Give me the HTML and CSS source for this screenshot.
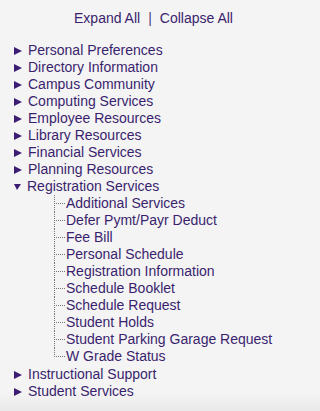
FILE: index.html
```html
<!DOCTYPE html>
<html lang="en">
<head>
<meta charset="utf-8">
<title>Menu</title>
<link rel="stylesheet" href="styles.css">
</head>
<body>
<div class="page">
  <div class="toolbar">
    <a href="#" class="link">Expand All</a><span class="sep">|</span><a href="#" class="link">Collapse All</a>
  </div>
  <ul class="tree">
    <li class="node"><div class="label"><span class="arrow right"></span><a href="#" class="link">Personal Preferences</a></div></li>
    <li class="node"><div class="label"><span class="arrow right"></span><a href="#" class="link">Directory Information</a></div></li>
    <li class="node"><div class="label"><span class="arrow right"></span><a href="#" class="link">Campus Community</a></div></li>
    <li class="node"><div class="label"><span class="arrow right"></span><a href="#" class="link">Computing Services</a></div></li>
    <li class="node"><div class="label"><span class="arrow right"></span><a href="#" class="link">Employee Resources</a></div></li>
    <li class="node"><div class="label"><span class="arrow right"></span><a href="#" class="link">Library Resources</a></div></li>
    <li class="node"><div class="label"><span class="arrow right"></span><a href="#" class="link">Financial Services</a></div></li>
    <li class="node"><div class="label"><span class="arrow right"></span><a href="#" class="link">Planning Resources</a></div></li>
    <li class="node open">
      <div class="label"><span class="arrow down"></span><a href="#" class="link">Registration Services</a></div>
      <ul class="sub">
        <li class="leaf"><a href="#" class="link">Additional Services</a></li>
        <li class="leaf"><a href="#" class="link">Defer Pymt/Payr Deduct</a></li>
        <li class="leaf"><a href="#" class="link">Fee Bill</a></li>
        <li class="leaf"><a href="#" class="link">Personal Schedule</a></li>
        <li class="leaf"><a href="#" class="link">Registration Information</a></li>
        <li class="leaf"><a href="#" class="link">Schedule Booklet</a></li>
        <li class="leaf"><a href="#" class="link">Schedule Request</a></li>
        <li class="leaf"><a href="#" class="link">Student Holds</a></li>
        <li class="leaf"><a href="#" class="link">Student Parking Garage Request</a></li>
        <li class="leaf last"><a href="#" class="link">W Grade Status</a></li>
      </ul>
    </li>
    <li class="node"><div class="label"><span class="arrow right"></span><a href="#" class="link">Instructional Support</a></div></li>
    <li class="node"><div class="label"><span class="arrow right"></span><a href="#" class="link">Student Services</a></div></li>
  </ul>
</div>
</body>
</html>
```
FILE: styles.css
```css
html, body {
  margin: 0;
  padding: 0;
}
html {
  background: #f4f4f4;
}
body {
  min-height: 411px;
  background: linear-gradient(to bottom, #f4f4f4 0, #f4f4f4 392px, #e9e9e9 411px) no-repeat;
  background-size: 100% 411px;
  font-family: "Liberation Sans", Arial, sans-serif;
  font-size: 14px;
  line-height: 17px;
  color: #3a1f6e;
}
.page {
  width: 286px;
  box-sizing: border-box;
  padding-top: 10px;
}
.link {
  color: #3a1f6e;
  text-decoration: none;
}
.toolbar {
  text-align: center;
  padding-left: 21px;
  white-space: nowrap;
}
.sep {
  margin: 0 8px;
  color: #4a3a80;
}
.tree {
  list-style: none;
  margin: 15px 0 0 0;
  padding: 0;
}
.label {
  display: flex;
  align-items: center;
  padding-left: 14px;
  gap: 6px;
  height: 17px;
}
.arrow {
  display: block;
  width: 0;
  height: 0;
  flex: none;
}
.arrow.right {
  border-left: 8px solid #3c1d74;
  border-top: 4.5px solid transparent;
  border-bottom: 4.5px solid transparent;
}
.arrow.down {
  border-top: 6px solid #3c1d74;
  border-left: 3.5px solid transparent;
  border-right: 4.5px solid transparent;
}
.sub {
  list-style: none;
  margin: 0 0 1px 54px;
  padding: 0;
}
.leaf {
  padding-left: 12px;
  height: 17px;
  background-image:
    repeating-linear-gradient(to right, #777 0 1px, transparent 1px 2px),
    repeating-linear-gradient(to bottom, #777 0 1px, transparent 1px 2px);
  background-size: 11px 1px, 1px 17px;
  background-position: 0 8px, 0 0;
  background-repeat: no-repeat;
}
.leaf.last {
  background-size: 11px 1px, 1px 9px;
}
```
